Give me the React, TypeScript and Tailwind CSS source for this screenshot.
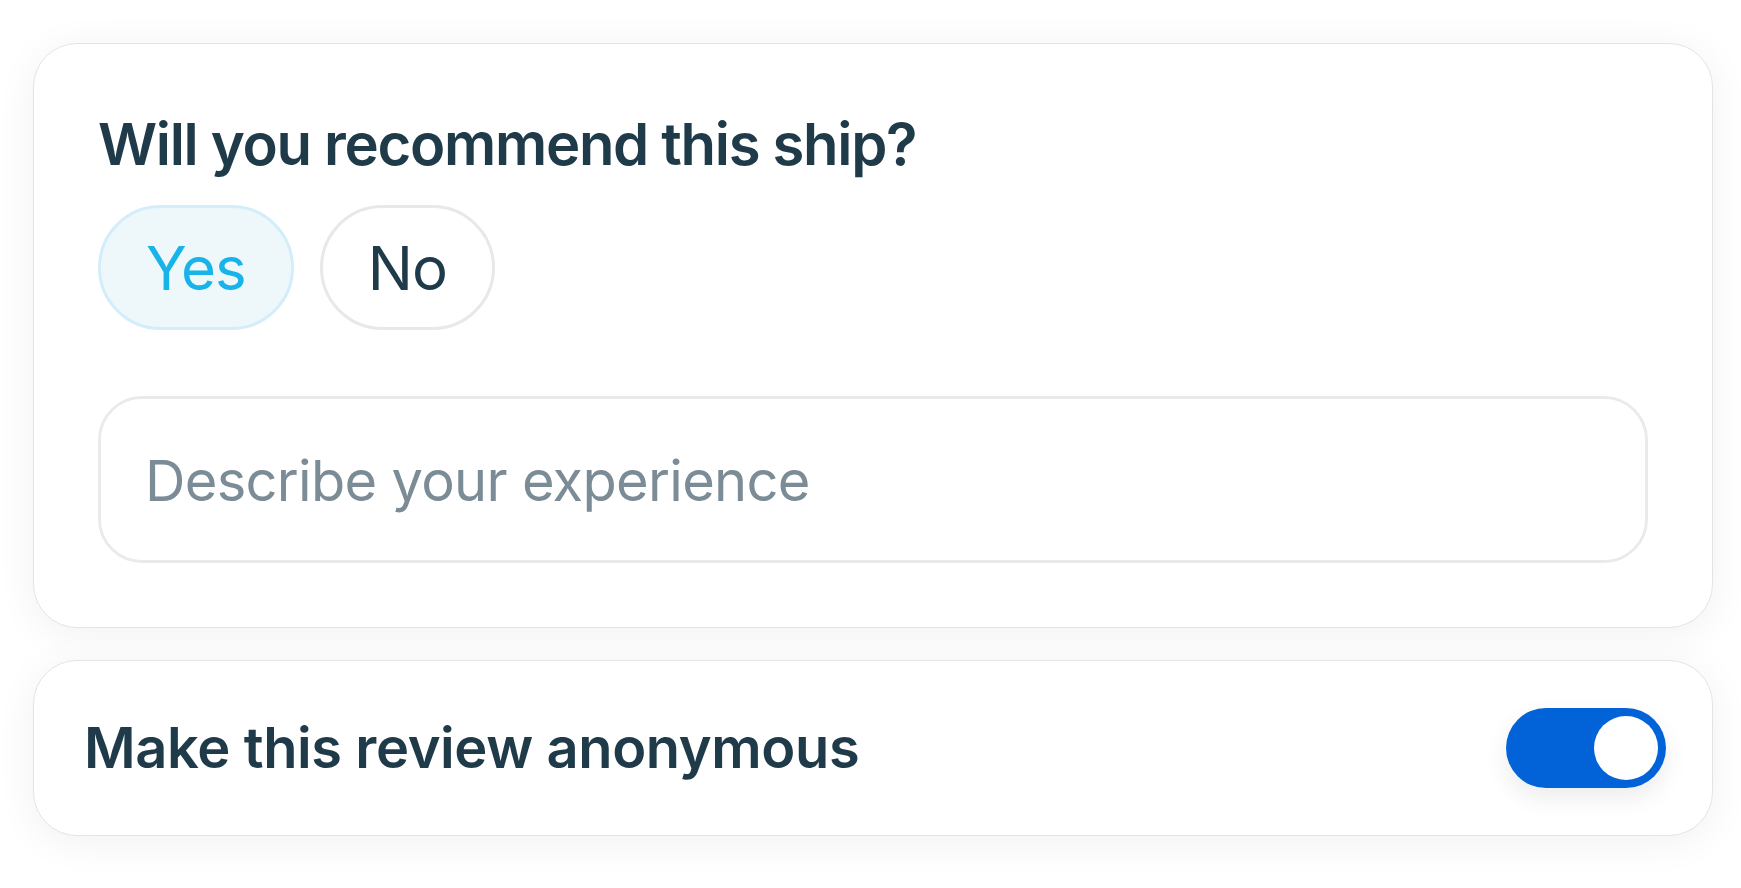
import { useState } from 'react';

const font = { fontFamily: 'Inter, "Noto Sans", sans-serif' };

export default function App() {
  const [recommend, setRecommend] = useState<'yes' | 'no'>('yes');
  const [anonymous, setAnonymous] = useState(true);

  return (
    <div className="min-h-[888px] w-full bg-white pl-[33px] pt-[43px]" style={font}>
      <div className="flex w-[1680px] flex-col gap-[32px]">
        <section className="rounded-[44px] border border-[#e4e4e4] bg-white px-[64px] pb-[64px] pt-[71px] shadow-[0_6px_40px_rgba(0,0,0,0.06)]">
          <h2 className="text-[58px] font-semibold leading-none tracking-[-1.3px] text-[#1f3a48]">
            Will you recommend this ship?
          </h2>

          <div className="mt-[32px] flex gap-[26px]">
            <ChoiceButton
              label="Yes"
              active={recommend === 'yes'}
              onClick={() => setRecommend('yes')}
            />
            <ChoiceButton
              label="No"
              active={recommend === 'no'}
              onClick={() => setRecommend('no')}
            />
          </div>

          <textarea
            rows={1}
            placeholder="Describe your experience"
            className="mt-[66px] block h-[167px] w-full resize-none rounded-[44px] border-[3px] border-[#ece9e9] bg-white px-[44px] py-[50px] text-[56px] leading-[64px] tracking-[-0.7px] text-[#1f3a48] outline-none placeholder:text-[#7b8c96]"
          />
        </section>

        <section className="flex h-[176px] items-center justify-between rounded-[44px] border border-[#e4e4e4] bg-white pl-[50px] pr-[46px] shadow-[0_6px_40px_rgba(0,0,0,0.06)]">
          <span className="text-[56px] font-semibold leading-none tracking-[-0.4px] text-[#1f3a48]">
            Make this review anonymous
          </span>
          <button
            type="button"
            role="switch"
            aria-checked={anonymous}
            onClick={() => setAnonymous((v) => !v)}
            className={
              anonymous
                ? 'flex h-[80px] w-[160px] items-center justify-end rounded-full bg-[#0263d9] p-[8px] shadow-[0_10px_24px_rgba(0,0,0,0.08)]'
                : 'flex h-[80px] w-[160px] items-center justify-start rounded-full bg-[#d6dadd] p-[8px] shadow-[0_10px_24px_rgba(0,0,0,0.08)]'
            }
          >
            <span className="block h-[64px] w-[64px] rounded-full bg-white" />
          </button>
        </section>
      </div>
    </div>
  );
}

function ChoiceButton({
  label,
  active,
  onClick,
}: {
  label: string;
  active: boolean;
  onClick: () => void;
}) {
  return (
    <button
      type="button"
      onClick={onClick}
      className={
        active
          ? 'flex h-[125px] items-center rounded-full border-[3px] border-[#d3eefa] bg-[#eef8fb] px-[45px] text-[60px] leading-none tracking-[-1px] text-[#18b3e8]'
          : 'flex h-[125px] items-center rounded-full border-[3px] border-[#e8e8e8] bg-white px-[45px] text-[60px] leading-none tracking-[-1px] text-[#1f3a48]'
      }
    >
      {label}
    </button>
  );
}
